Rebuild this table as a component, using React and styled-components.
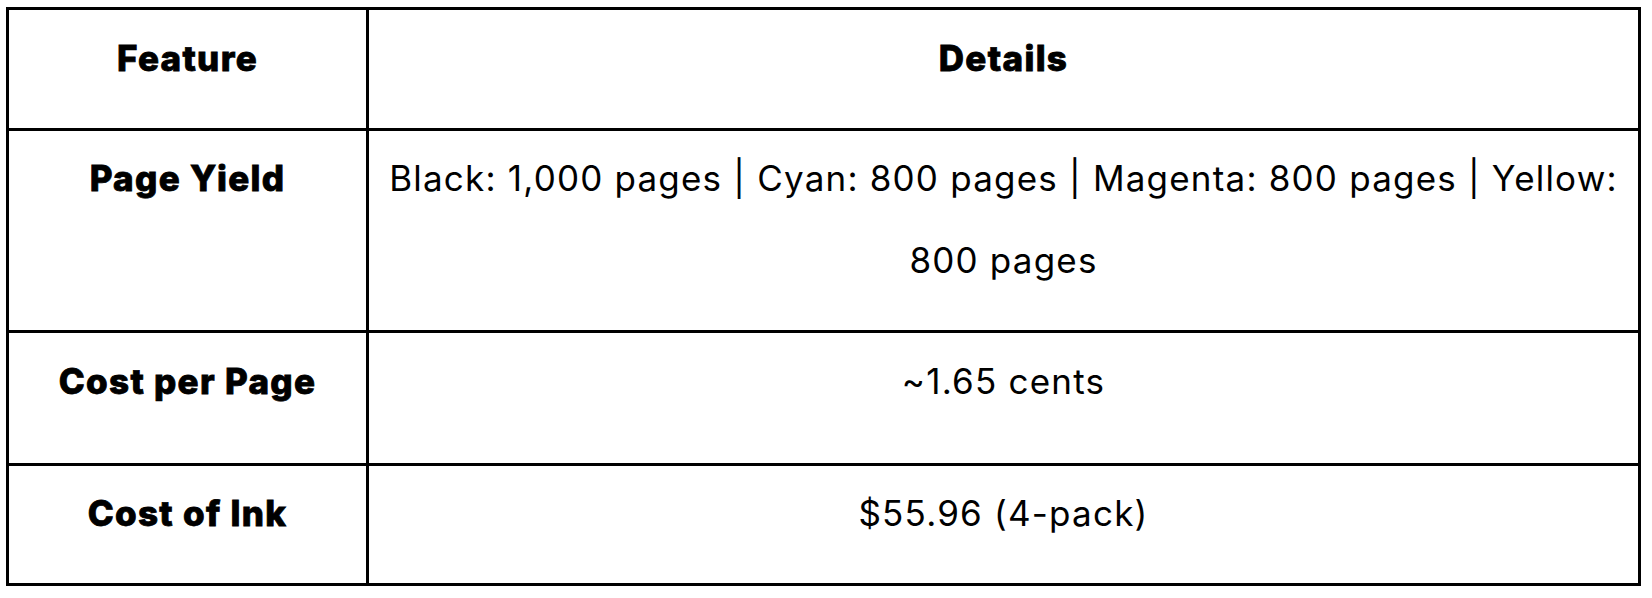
import styled, { createGlobalStyle } from "styled-components";

const GlobalStyle = createGlobalStyle`
  body {
    margin: 0;
    background: #ffffff;
  }
`;

const Page = styled.div`
  padding: 7px 0 0 6px;
  font-family: Inter, "Open Sans", sans-serif;
  color: #000000;
`;

const Table = styled.div`
  width: 1635px;
  box-sizing: border-box;
  border-top: 3px solid #000;
  border-left: 3px solid #000;
`;

const Row = styled.div`
  display: grid;
  grid-template-columns: 360px 1fr;
`;

const Cell = styled.div`
  box-sizing: border-box;
  border-right: 3px solid #000;
  border-bottom: 3px solid #000;
  padding: ${(props) => props.$pt}px 10px ${(props) => props.$pb}px;
  text-align: center;
  font-size: 35px;
  font-weight: ${(props) => (props.$bold ? 800 : 400)};
  letter-spacing: ${(props) => (props.$bold ? 1.3 : 1.2)}px;
  -webkit-text-stroke: ${(props) => (props.$bold ? "0.8px #000" : "0")};
  line-height: 82px;
`;

const rows = [
  { label: "Feature", value: "Details", head: true, pt: 7, pb: 29 },
  {
    label: "Page Yield",
    value: "Black: 1,000 pages | Cyan: 800 pages | Magenta: 800 pages | Yellow: 800 pages",
    pt: 6,
    pb: 29,
  },
  { label: "Cost per Page", value: "~1.65 cents", pt: 7, pb: 41 },
  { label: "Cost of Ink", value: "$55.96 (4-pack)", pt: 6, pb: 29 },
];

function App() {
  return (
    <Page>
      <GlobalStyle />
      <Table>
        {rows.map((row) => (
          <Row key={row.label}>
            <Cell $bold $pt={row.pt} $pb={row.pb}>
              {row.label}
            </Cell>
            <Cell $bold={row.head} $pt={row.pt} $pb={row.pb}>
              {row.value}
            </Cell>
          </Row>
        ))}
      </Table>
    </Page>
  );
}

export default App;
